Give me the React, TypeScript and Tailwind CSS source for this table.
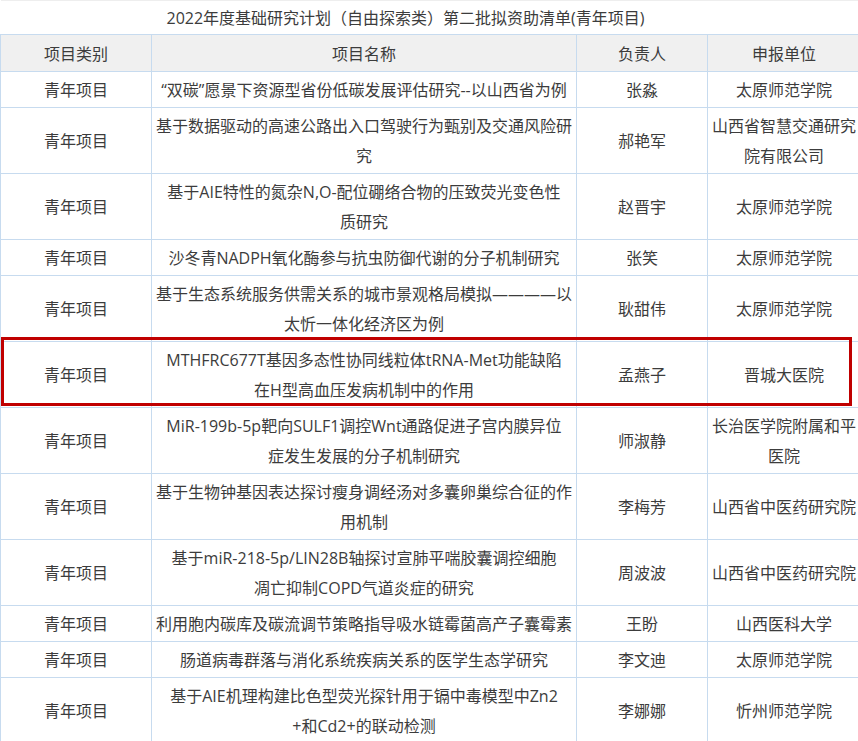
import React from 'react';

type Row = {
  name: string[];
  leader: string;
  unit: string[];
};

const ROWS: Row[] = [
  { name: ['“双碳”愿景下资源型省份低碳发展评估研究--以山西省为例'], leader: '张淼', unit: ['太原师范学院'] },
  { name: ['基于数据驱动的高速公路出入口驾驶行为甄别及交通风险研', '究'], leader: '郝艳军', unit: ['山西省智慧交通研究', '院有限公司'] },
  { name: ['基于AIE特性的氮杂N,O-配位硼络合物的压致荧光变色性', '质研究'], leader: '赵晋宇', unit: ['太原师范学院'] },
  { name: ['沙冬青NADPH氧化酶参与抗虫防御代谢的分子机制研究'], leader: '张笑', unit: ['太原师范学院'] },
  { name: ['基于生态系统服务供需关系的城市景观格局模拟————以', '太忻一体化经济区为例'], leader: '耿甜伟', unit: ['太原师范学院'] },
  { name: ['MTHFRC677T基因多态性协同线粒体tRNA-Met功能缺陷', '在H型高血压发病机制中的作用'], leader: '孟燕子', unit: ['晋城大医院'] },
  { name: ['MiR-199b-5p靶向SULF1调控Wnt通路促进子宫内膜异位', '症发生发展的分子机制研究'], leader: '师淑静', unit: ['长治医学院附属和平', '医院'] },
  { name: ['基于生物钟基因表达探讨瘦身调经汤对多囊卵巢综合征的作', '用机制'], leader: '李梅芳', unit: ['山西省中医药研究院'] },
  { name: ['基于miR-218-5p/LIN28B轴探讨宣肺平喘胶囊调控细胞', '凋亡抑制COPD气道炎症的研究'], leader: '周波波', unit: ['山西省中医药研究院'] },
  { name: ['利用胞内碳库及碳流调节策略指导吸水链霉菌高产子囊霉素'], leader: '王盼', unit: ['山西医科大学'] },
  { name: ['肠道病毒群落与消化系统疾病关系的医学生态学研究'], leader: '李文迪', unit: ['太原师范学院'] },
  { name: ['基于AIE机理构建比色型荧光探针用于镉中毒模型中Zn2', '+和Cd2+的联动检测'], leader: '李娜娜', unit: ['忻州师范学院'] },
];

const cell = 'border border-[#c7dbef] text-center align-middle leading-[30px] pt-[3px] pb-[2px] px-0';

function Lines({ lines }: { lines: string[] }) {
  return (
    <>
      {lines.map((l) => (
        <div key={l} className="whitespace-nowrap">{l}</div>
      ))}
    </>
  );
}

export default function App() {
  return (
    <div
      className="relative w-[858px] h-[741px] overflow-hidden bg-white text-[16px] text-[#3c3c3c]"
      style={{ fontFamily: '"Open Sans", "Noto Sans CJK SC", sans-serif' }}
    >
      <table className="table-fixed border-collapse w-[860px]">
        <colgroup>
          <col className="w-[151px]" />
          <col className="w-[425px]" />
          <col className="w-[131px]" />
          <col className="w-[153px]" />
        </colgroup>
        <tbody>
          <tr className="h-[34px]">
            <td colSpan={4} className="border-b border-[#c7dbef] border-t border-t-[#eeeeee] text-center pr-[50px] align-middle">
              2022年度基础研究计划（自由探索类）第二批拟资助清单(青年项目)
            </td>
          </tr>
          <tr className="bg-[#f0f0f0]">
            <td className={`${cell} h-[37px]`}>项目类别</td>
            <td className={`${cell} h-[37px]`}>项目名称</td>
            <td className={`${cell} h-[37px]`}>负责人</td>
            <td className={`${cell} h-[37px]`}>申报单位</td>
          </tr>
          {ROWS.map((r) => (
            <tr key={r.leader}>
              <td className={cell}>青年项目</td>
              <td className={cell}>
                <Lines lines={r.name} />
              </td>
              <td className={cell}>{r.leader}</td>
              <td className={cell}>
                <Lines lines={r.unit} />
              </td>
            </tr>
          ))}
        </tbody>
      </table>

      {/* highlight annotation */}
      <div className="absolute left-[1px] top-[337px] w-[851px] h-[69px] border-[3px] border-[#c00000] pointer-events-none" />
    </div>
  );
}
